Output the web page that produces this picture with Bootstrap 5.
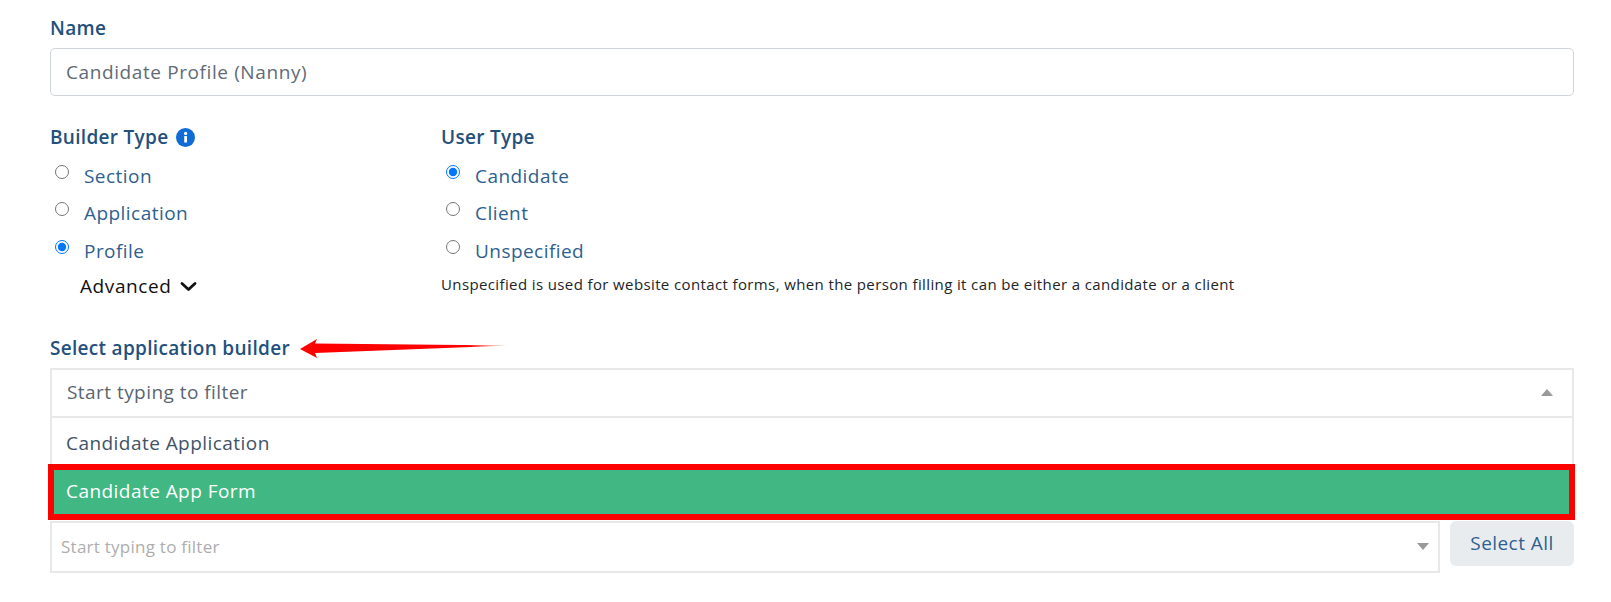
<!DOCTYPE html>
<html lang="en">
<head>
<meta charset="utf-8">
<title>Builder form</title>
<link href="https://cdn.jsdelivr.net/npm/bootstrap@5.3.0/dist/css/bootstrap.min.css" rel="stylesheet">
<style>
body{font-family:"Open Sans","Noto Sans",sans-serif;background:#fff;overflow:hidden;font-size:19px;letter-spacing:.45px;}
.page-wrap{padding:15px 37px 0 50px;}
.fld-label{font-size:19px;font-weight:600;letter-spacing:.3px;color:#23507d;line-height:27px;margin:0;}
.name-input.form-control{height:48px;font-size:19px;letter-spacing:.6px;color:#5f6b76;padding:0 15px;border-color:#ced4da;border-radius:5px;margin-top:6px;}
.types{margin-top:28px;}
.type-a{flex:0 0 391px;}
.radio-list{padding-top:6px;}
.radio-line{height:37.5px;color:#2f5f8f;padding-left:5px;margin:0;}
.radio-line input{width:14px;height:14px;margin:0 15px 8px 0;flex:none;}
.adv-link{color:#111;padding-left:30px;line-height:27px;margin-top:3px;letter-spacing:.6px;}
.hint-text{font-size:15px;letter-spacing:.38px;color:#212529;line-height:21px;margin-top:4px;}
.sel-head{margin-top:35px;}
.arrow-mark{margin-left:10px;}
.ms-box{border:2px solid #e8e8e8;border-width:2px 2px 0;margin-top:6px;}
.ms-top{height:48px;padding:0 19px 0 15px;color:#5a6570;border-bottom:2px solid #e8e8e8;}
.ms-opt{height:52px;padding:0 14px;color:#3f5368;}
.ms-on{height:44px;padding:0 12px;color:#fff;background:#41b883;outline:6px solid #f00;margin:0 3px 0 2px;position:relative;}
.ms-row{margin-top:7px;}
.ms-small{height:52px;flex:1 1 auto;border:2px solid #e8e8e8;padding:0 9px;font-size:17px;letter-spacing:.25px;color:#adadad;}
.tri-up{width:0;height:0;border:6px solid transparent;border-top:0;border-bottom:7px solid #999;}
.tri-down{width:0;height:0;border:6px solid transparent;border-bottom:0;border-top:7px solid #999;}
.sel-all.btn{flex:0 0 124px;height:45px;margin-left:10px;background:#e9ecef;border:0;color:#2f5f8f;font-size:19px;letter-spacing:.45px;border-radius:6px;padding:0;}
</style>
</head>
<body>
<div class="page-wrap">
  <label class="fld-label d-block" for="nm">Name</label>
  <input id="nm" class="form-control name-input" value="Candidate Profile (Nanny)">

  <div class="d-flex types">
    <div class="type-a">
      <div class="fld-label d-flex align-items-center gap-2">Builder Type
        <svg width="19" height="19" viewBox="0 0 19 19" aria-hidden="true"><circle cx="9.5" cy="9.5" r="9.5" fill="#0f6bd6"/><rect x="8.2" y="8" width="2.8" height="6.5" rx=".6" fill="#fff"/><circle cx="9.6" cy="5.4" r="1.6" fill="#fff"/></svg>
      </div>
      <div class="radio-list">
        <label class="radio-line d-flex align-items-center"><input type="radio" name="bt">Section</label>
        <label class="radio-line d-flex align-items-center"><input type="radio" name="bt">Application</label>
        <label class="radio-line d-flex align-items-center"><input type="radio" name="bt" checked>Profile</label>
      </div>
      <div class="adv-link d-flex align-items-center gap-2">Advanced
        <svg width="17" height="11" viewBox="0 0 17 11" aria-hidden="true"><path d="M2 2.5l6.5 6 6.5-6" fill="none" stroke="#111" stroke-width="2.8" stroke-linecap="round" stroke-linejoin="round"/></svg>
      </div>
    </div>
    <div class="flex-grow-1">
      <div class="fld-label">User Type</div>
      <div class="radio-list">
        <label class="radio-line d-flex align-items-center"><input type="radio" name="ut" checked>Candidate</label>
        <label class="radio-line d-flex align-items-center"><input type="radio" name="ut">Client</label>
        <label class="radio-line d-flex align-items-center"><input type="radio" name="ut">Unspecified</label>
      </div>
      <div class="hint-text">Unspecified is used for website contact forms, when the person filling it can be either a candidate or a client</div>
    </div>
  </div>

  <div class="d-flex align-items-center sel-head">
    <div class="fld-label">Select application builder</div>
    <svg class="arrow-mark" width="212" height="20" viewBox="0 0 212 20" aria-hidden="true">
      <defs><linearGradient id="fade" x1="0" x2="1" y1="0" y2="0"><stop offset="0" stop-color="#f00"/><stop offset=".8" stop-color="#f00"/><stop offset="1" stop-color="#f00" stop-opacity="0"/></linearGradient></defs>
      <path d="M0 11L17 1l-2 4.5L212 7.5 15 15l2 5z" fill="url(#fade)"/>
    </svg>
  </div>
  <div class="ms-box">
    <div class="ms-top d-flex align-items-center justify-content-between"><span>Start typing to filter</span><span class="tri-up"></span></div>
    <div class="ms-opt d-flex align-items-center">Candidate Application</div>
    <div class="ms-on d-flex align-items-center">Candidate App Form</div>
  </div>
  <div class="d-flex align-items-start ms-row">
    <div class="ms-small d-flex align-items-center justify-content-between"><span>Start typing to filter</span><span class="tri-down"></span></div>
    <button type="button" class="btn sel-all">Select All</button>
  </div>
</div>
<script src="https://cdn.jsdelivr.net/npm/bootstrap@5.3.0/dist/js/bootstrap.bundle.min.js"></script>
</body>
</html>
